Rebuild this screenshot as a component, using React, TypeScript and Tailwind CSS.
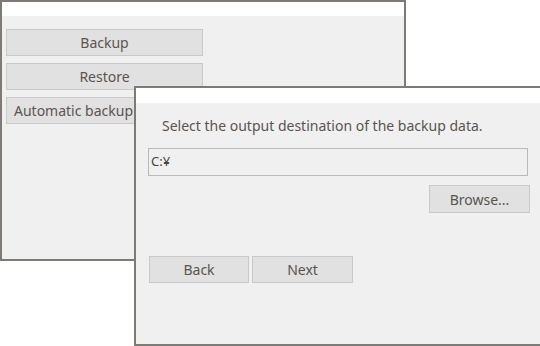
import React from "react";

const btn =
  "flex items-center justify-center h-[27px] bg-[#e1e1e1] border border-[#c9c9c9] text-[14px] text-[#5a544f]";

export default function App() {
  return (
    <div
      className="relative w-[540px] h-[346px] bg-white overflow-hidden"
      style={{ fontFamily: '"Noto Sans", "Noto Sans CJK JP", sans-serif' }}
    >
      {/* main window */}
      <div className="absolute left-0 top-0 w-[406px] h-[261px] border-2 border-[#807a75] bg-[#f0f0f0] flex flex-col">
        <div className="h-[14px] bg-white" />
        <div className="flex flex-col gap-[7px] pl-[4px] pt-[13px]">
          <div className={`${btn} w-[197px]`}>Backup</div>
          <div className={`${btn} w-[197px]`}>Restore</div>
          <div className={`${btn} w-[197px] !justify-start pl-[7px]`}>Automatic backup</div>
        </div>
      </div>

      {/* dialog */}
      <div className="absolute left-[134px] top-[86px] w-[420px] h-[260px] border-2 border-[#807a75] bg-[#f0f0f0] flex flex-col">
        <div className="h-[15px] bg-white" />
        <div className="pl-[26px] pt-[13px] text-[14px] leading-[20px] text-[#5a544f]">
          Select the output destination of the backup data.
        </div>
        <div className="ml-[12px] mt-[12px] w-[380px] h-[28px] border border-[#b9b9b9] bg-[#f0f0f0] flex items-center pl-[2px] text-[13px] text-[#4a4541]">
          C:¥
        </div>
        <div className="flex justify-end w-[394px] mt-[9px]">
          <div className={`${btn} w-[101px] h-[28px]`}>Browse...</div>
        </div>
        <div className="flex gap-[3px] ml-[13px] mt-[43px]">
          <div className={`${btn} w-[100px]`}>Back</div>
          <div className={`${btn} w-[101px]`}>Next</div>
        </div>
      </div>
    </div>
  );
}
